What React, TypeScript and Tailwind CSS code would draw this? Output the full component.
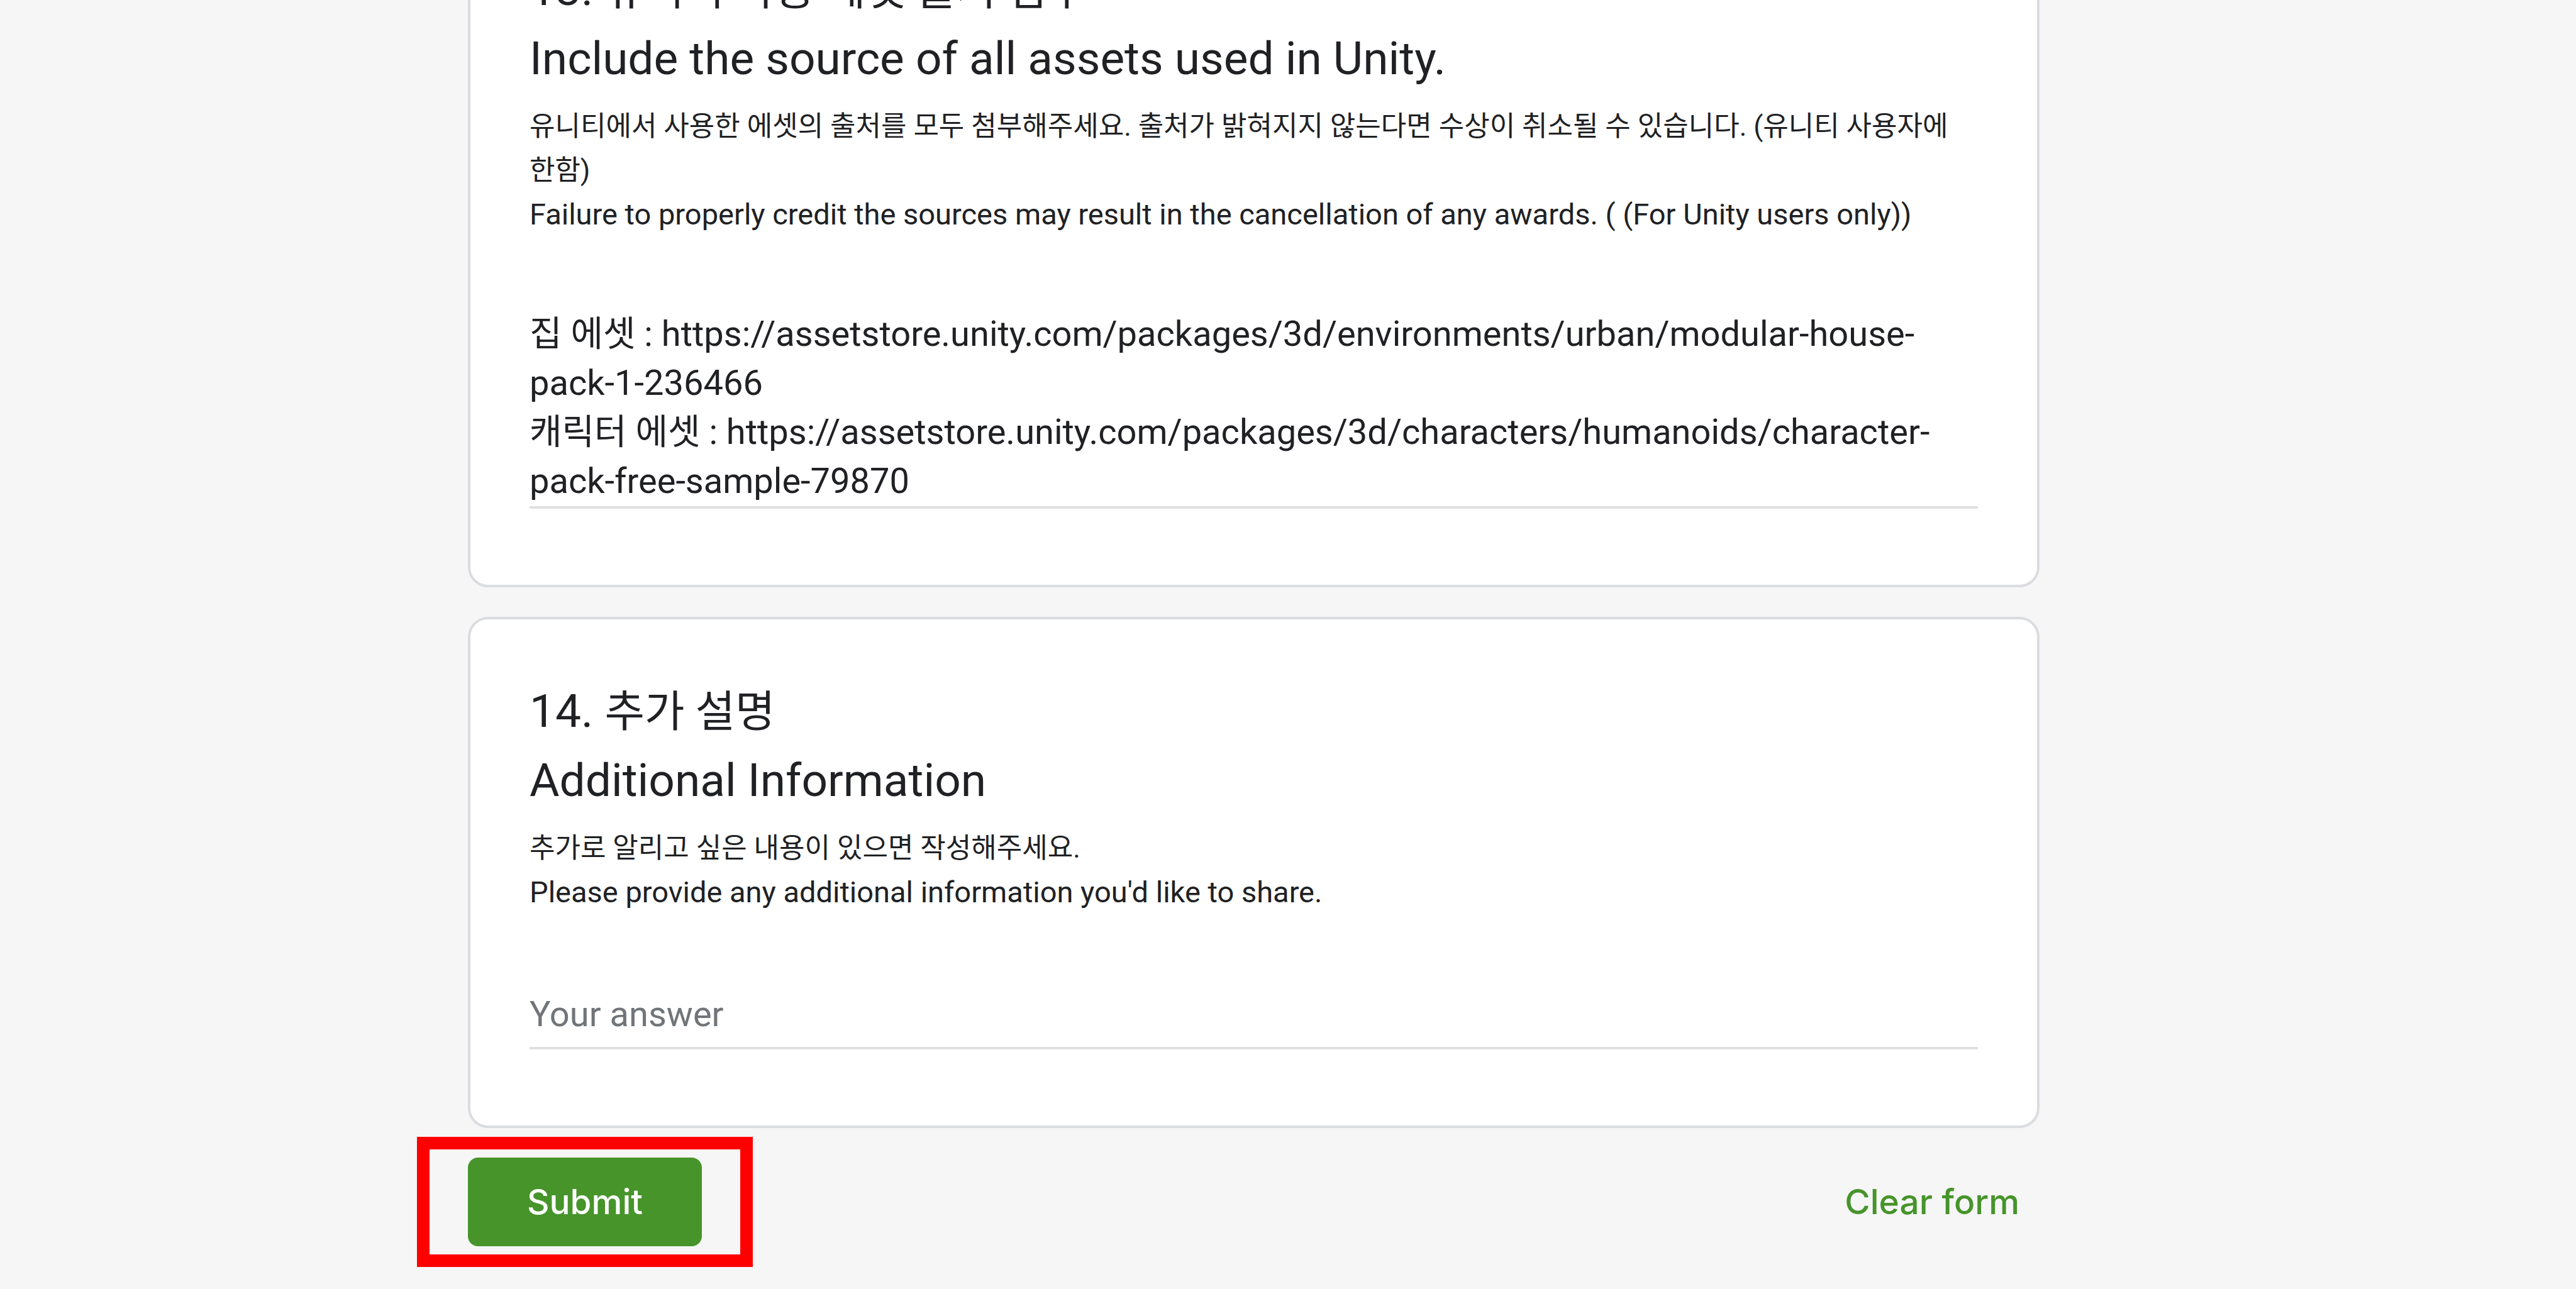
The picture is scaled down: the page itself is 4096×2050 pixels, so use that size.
import { useState } from "react";
import type { ReactNode } from "react";

type QuestionProps = {
  id: string;
  number: string;
  koreanTitle: string;
  englishTitle: string;
  koreanHint: string;
  englishHint: string;
  children: ReactNode;
};

function Question({
  id,
  number,
  koreanTitle,
  englishTitle,
  koreanHint,
  englishHint,
  children,
}: QuestionProps) {
  return (
    <section className="rounded-[32px] border-4 border-[#dadce0] bg-white px-[94px] pt-[92px] pb-[121px]">
      <label htmlFor={id} className="block text-[73px] leading-[109px]">
        <span className="block">
          {number} <span className="text-[69px]">{koreanTitle}</span>
        </span>
        <span className="block">{englishTitle}</span>
      </label>
      <div id={`${id}-hint`} className="mt-[18px] text-[47px] leading-[70px] break-keep">
        <p className="text-[44px]">{koreanHint}</p>
        <p>{englishHint}</p>
      </div>
      {children}
    </section>
  );
}

const initialSources =
  "집 에셋 : https://assetstore.unity.com/packages/3d/environments/urban/modular-house-pack-1-236466\n" +
  "캐릭터 에셋 : https://assetstore.unity.com/packages/3d/characters/humanoids/character-pack-free-sample-79870";

export default function App() {
  const [sources, setSources] = useState(initialSources);
  const [extra, setExtra] = useState("");

  const clear = () => {
    setSources("");
    setExtra("");
  };

  return (
    <div className="flex h-screen flex-col justify-end overflow-hidden bg-[#f6f6f6] pr-[109px] pb-[68px] font-['Roboto','Noto_Sans_CJK_KR',sans-serif] text-[#202124]">
      <form
        className="mx-auto flex w-full max-w-[2499px] shrink-0 flex-col gap-[47px]"
        onSubmit={(event) => event.preventDefault()}
      >
        <Question
          id="asset-sources"
          number="13."
          koreanTitle="유니티 사용 에셋 출처 첨부"
          englishTitle="Include the source of all assets used in Unity."
          koreanHint="유니티에서 사용한 에셋의 출처를 모두 첨부해주세요. 출처가 밝혀지지 않는다면 수상이 취소될 수 있습니다. (유니티 사용자에 한함)"
          englishHint="Failure to properly credit the sources may result in the cancellation of any awards. ( (For Unity users only))"
        >
          <textarea
            id="asset-sources"
            aria-describedby="asset-sources-hint"
            rows={4}
            spellCheck={false}
            value={sources}
            onChange={(event) => setSources(event.target.value)}
            className="mt-[116px] block w-full resize-none overflow-hidden border-b-4 border-[#e0e0e0] pb-px text-[56px] leading-[78px] outline-none"
          />
        </Question>

        <Question
          id="additional-info"
          number="14."
          koreanTitle="추가 설명"
          englishTitle="Additional Information"
          koreanHint="추가로 알리고 싶은 내용이 있으면 작성해주세요."
          englishHint="Please provide any additional information you'd like to share."
        >
          <input
            id="additional-info"
            type="text"
            aria-describedby="additional-info-hint"
            placeholder="Your answer"
            value={extra}
            onChange={(event) => setExtra(event.target.value)}
            className="mt-[120px] block w-full border-b-4 border-[#e0e0e0] pb-[13px] text-[56px] leading-[78px] outline-none placeholder:text-[#70757a]"
          />
        </Question>

        <div className="flex items-center justify-between font-['Inter',sans-serif] text-[55px] leading-[77px] font-medium">
          <div className="relative">
            <button type="submit" className="block rounded-2xl bg-[#46942a] px-[94px] py-8 text-white">
              Submit
            </button>
            <span className="pointer-events-none absolute -inset-x-[81px] -inset-y-[33px] border-20 border-[#ff0000]" />
          </div>
          <button type="button" onClick={clear} className="px-8 py-8 text-[#46942a]">
            Clear form
          </button>
        </div>
      </form>
    </div>
  );
}
